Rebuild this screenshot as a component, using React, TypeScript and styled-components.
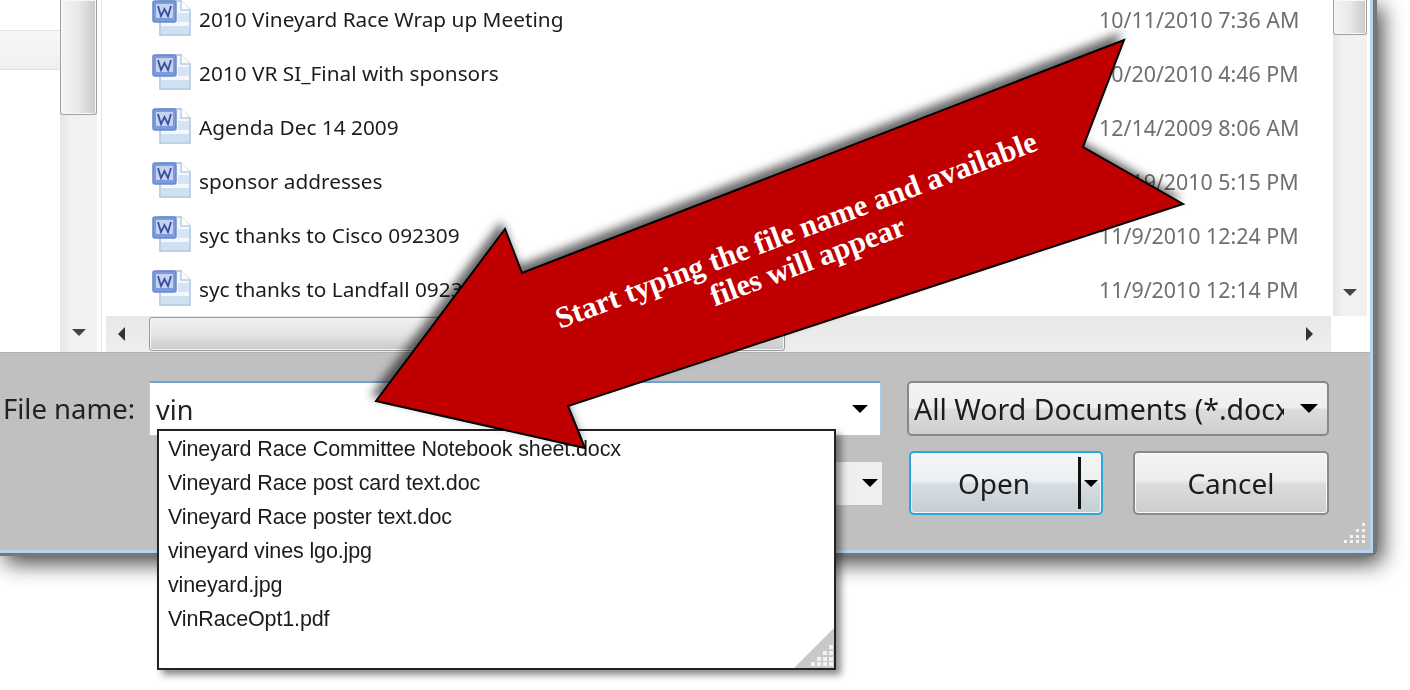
import styled, { createGlobalStyle } from "styled-components";

const GlobalStyle = createGlobalStyle`
  html, body {
    margin: 0;
    padding: 0;
    background: #fff;
  }
`;

const Page = styled.div`
  position: relative;
  width: 1410px;
  height: 690px;
  overflow: hidden;
  background: #fff;
  font-family: "Noto Sans", "Open Sans", sans-serif;
`;

const Window = styled.div`
  box-sizing: border-box;
  width: 1377px;
  height: 556px;
  border-right: 4px solid #777;
  border-bottom: 3px solid #777;
  border-bottom-right-radius: 5px;
  box-shadow: 5px 7px 22px rgba(0, 0, 0, 0.75);
`;

const WindowInner = styled.div`
  display: flex;
  flex-direction: column;
  box-sizing: border-box;
  height: 100%;
  border-right: 3px solid #b5d3ee;
  border-bottom: 3px solid #b5d3ee;
  background: #c0c0c0;
`;

const Browser = styled.div`
  display: grid;
  grid-template-columns: 60px 37px 1fr;
  height: 353px;
  background: #fff;
  border-bottom: 1px solid #b0b0b0;
  box-sizing: border-box;
`;

const NavPane = styled.div`
  padding-top: 30px;
`;

const NavRow = styled.div`
  height: 40px;
  box-sizing: border-box;
  border-top: 1px solid #e4e4e4;
  border-bottom: 1px solid #e4e4e4;
  background: linear-gradient(#f8f8f8, #efefef);
`;

const VScroll = styled.div<{ $width: number }>`
  display: flex;
  flex-direction: column;
  align-items: center;
  width: ${(p) => p.$width}px;
  flex: none;
  background: linear-gradient(90deg, #e6e6e6, #f1f1f1 30%, #f1f1f1);
`;

const VThumb = styled.div<{ $height: number }>`
  box-sizing: border-box;
  width: 100%;
  height: ${(p) => p.$height}px;
  border: 1px solid #a0a0a0;
  border-top: none;
  border-radius: 0 0 3px 3px;
  background: linear-gradient(90deg, #f4f4f4, #e8e8e8 50%, #c9cacc);
  box-shadow: inset 0 0 0 1px #f8f8f8;
`;

const Caret = styled.span<{ $dir?: "down" | "left" | "right"; $size: number; $color?: string }>`
  display: block;
  flex: none;
  width: 0;
  height: 0;
  border-style: solid;
  border-color: transparent;
  ${(p) =>
    p.$dir === "left"
      ? `border-width:${p.$size}px ${p.$size}px ${p.$size}px 0;border-right-color:${p.$color ?? "#333"};`
      : p.$dir === "right"
        ? `border-width:${p.$size}px 0 ${p.$size}px ${p.$size}px;border-left-color:${p.$color ?? "#333"};`
        : `border-width:${p.$size}px ${p.$size}px 0 ${p.$size}px;border-top-color:${p.$color ?? "#000"};`}
`;

const VArrowSlot = styled.div<{ $top: number }>`
  margin-top: ${(p) => p.$top}px;
`;

const FilesColumn = styled.div`
  display: flex;
  flex-direction: column;
  min-width: 0;
  padding-left: 4px;
  border-left: 1px solid #d8e8f6;
  margin-left: 4px;
`;

const FilesArea = styled.div`
  display: flex;
  height: 316px;
  padding-right: 3px;
`;

const FileList = styled.div`
  flex: 1;
  min-width: 0;
  height: 316px;
  overflow: hidden;
  padding-left: 46px;
`;

const FileRows = styled.div`
  margin-top: -8px;
`;

const FileRow = styled.div`
  display: flex;
  align-items: center;
  height: 54px;
`;

const FileIcon = styled.svg`
  flex: none;
  width: 40px;
  height: 40px;
  filter: blur(0.6px);
`;

const FileName = styled.span`
  width: 900px;
  margin-left: 7px;
  font-size: 20.8px;
  color: #1c1c1c;
  white-space: nowrap;
  filter: blur(0.5px);
`;

const FileDate = styled.span`
  font-size: 21.4px;
  color: #6f6f6f;
  white-space: nowrap;
  filter: blur(0.5px);
`;

const HScroll = styled.div`
  display: flex;
  align-items: center;
  height: 36px;
  width: 1225px;
  background: linear-gradient(#e8e8e8, #eeeeee);
`;

const HArrowLeft = styled.div`
  width: 43px;
  padding-left: 12px;
  box-sizing: border-box;
`;

const HThumb = styled.div`
  box-sizing: border-box;
  width: 636px;
  height: 34px;
  border: 1px solid #9a9a9a;
  border-radius: 3px;
  background: linear-gradient(#f2f2f2, #e4e4e4 50%, #c8c9cb);
  box-shadow: inset 0 0 0 1px #f6f6f6;
`;

const HArrowRight = styled.div`
  margin-left: auto;
  padding-right: 18px;
`;

const ControlPanel = styled.div`
  position: relative;
  flex: 1;
  display: grid;
  grid-template-columns: 146px 758px 422px;
  grid-template-rows: 55px 64px;
  row-gap: 15px;
  padding: 28px 0 0 3px;
`;

const NameLabel = styled.label`
  align-self: center;
  font-size: 27.5px;
  color: #222;
  filter: blur(0.5px);
`;

const NameCombo = styled.div`
  display: flex;
  align-items: center;
  justify-content: space-between;
  box-sizing: border-box;
  width: 732px;
  padding: 0 12px 0 6px;
  border: 1px solid #a6cdec;
  border-top: 2px solid #6ea3d0;
  border-radius: 2px;
  background: #fff;
`;

const NameValue = styled.span`
  font-size: 27px;
  color: #222;
  filter: blur(0.5px);
`;

const TypeSelect = styled.div`
  display: flex;
  align-items: center;
  box-sizing: border-box;
  padding: 0 9px 0 5px;
  border: 2px solid #888;
  border-radius: 5px;
  background: linear-gradient(#f3f3f3, #eeeeee 48%, #dcdcdc 52%, #cfcfcf);
`;

const TypeValue = styled.span`
  flex: 1;
  min-width: 0;
  margin-right: 16px;
  overflow: hidden;
  white-space: nowrap;
  font-size: 28.5px;
  color: #1c1c1c;
  filter: blur(0.5px);
`;

const SecondComboCell = styled.div`
  display: flex;
  justify-content: flex-end;
  align-items: center;
  padding-right: 25px;
`;

const SecondCombo = styled.div`
  display: flex;
  align-items: center;
  justify-content: flex-end;
  box-sizing: border-box;
  width: 60px;
  height: 43px;
  padding-right: 4px;
  background: #efefef;
`;

const Actions = styled.div`
  display: flex;
  justify-content: space-between;
  padding-left: 2px;
`;

const PushButton = styled.button<{ $primary?: boolean }>`
  position: relative;
  box-sizing: border-box;
  width: ${(p) => (p.$primary ? 194 : 196)}px;
  height: 64px;
  padding: 0;
  border: 2px solid ${(p) => (p.$primary ? "#2ba6dc" : "#8a8a8a")};
  border-radius: 5px;
  font: inherit;
  font-size: 28px;
  color: #1c1c1c;
  text-align: center;
  background: ${(p) =>
    p.$primary
      ? "linear-gradient(#f3f5f6, #edf0f2 46%, #d6dee3 52%, #c5ced3)"
      : "linear-gradient(#f4f4f4, #ececec 46%, #dcdcdc 52%, #cdcdcd)"};
  box-shadow: inset 0 0 0 1px #f8f8f8;
`;

const ButtonLabel = styled.span<{ $primary?: boolean }>`
  display: block;
  padding-right: ${(p) => (p.$primary ? 24 : 0)}px;
  filter: blur(0.5px);
`;

const SplitDivider = styled.span`
  position: absolute;
  top: 4px;
  bottom: 4px;
  right: 20px;
  width: 3px;
  background: #111;
`;

const SplitCaret = styled.span`
  position: absolute;
  top: 27px;
  right: 3px;
`;

const WindowGrip = styled.svg`
  position: absolute;
  right: 4px;
  bottom: 7px;
  width: 24px;
  height: 24px;
`;

const Suggestions = styled.div`
  position: absolute;
  left: 157px;
  top: 429px;
  box-sizing: border-box;
  width: 679px;
  height: 241px;
  border: 2px solid #222;
  background: #fff;
  padding: 2px 0 0 9px;
  box-shadow: 5px 5px 7px rgba(0, 0, 0, 0.45);
  font-family: "Liberation Sans", Arial, sans-serif;
`;

const Suggestion = styled.div`
  height: 34px;
  line-height: 32px;
  font-size: 21.5px;
  letter-spacing: -0.13px;
  color: #1c1c1c;
  white-space: nowrap;
  filter: blur(0.5px);
`;

const SuggestionGrip = styled.svg`
  position: absolute;
  right: 0;
  bottom: 0;
  width: 40px;
  height: 40px;
`;

const Callout = styled.svg`
  position: absolute;
  left: 0;
  top: 0;
  width: 1410px;
  height: 690px;
  filter: drop-shadow(-4px -6px 5px rgba(0, 0, 0, 0.6));
`;

const CalloutText = styled.div`
  position: absolute;
  left: 302px;
  top: 213px;
  width: 1000px;
  text-align: center;
  font-family: "Liberation Serif", "Times New Roman", serif;
  font-weight: bold;
  font-size: 30.4px;
  line-height: 33px;
  color: #fff;
  transform: rotate(-20.5deg);
`;

const files = [
  { name: "2010 Vineyard Race Wrap up Meeting", date: "10/11/2010 7:36 AM" },
  { name: "2010 VR SI_Final with sponsors", date: "10/20/2010 4:46 PM" },
  { name: "Agenda Dec 14 2009", date: "12/14/2009 8:06 AM" },
  { name: "sponsor addresses", date: "10/19/2010 5:15 PM" },
  { name: "syc thanks to Cisco 092309", date: "11/9/2010 12:24 PM" },
  { name: "syc thanks to Landfall 092309", date: "11/9/2010 12:14 PM" },
];

const suggestions = [
  "Vineyard Race Committee Notebook sheet.docx",
  "Vineyard Race post card text.doc",
  "Vineyard Race poster text.doc",
  "vineyard vines lgo.jpg",
  "vineyard.jpg",
  "VinRaceOpt1.pdf",
];

const WordIcon = () => (
  <FileIcon viewBox="0 0 40 40">
    <path d="M8 2h21l9 9v25H8z" fill="#f4f8fc" stroke="#a9c3dd" strokeWidth="1.5" />
    <path d="M29 1v10h9" fill="#fff" stroke="#b8cde2" strokeWidth="1.5" />
    <path d="M9 27h28v8H9z" fill="#cfe0f1" />
    <path d="M26 14h11v9H26z" fill="#d7e5f3" />
    <rect x="1" y="2" width="23" height="21" rx="2" fill="#7b9bdc" stroke="#6a88cc" strokeWidth="1.5" />
    <rect x="4" y="5" width="17" height="14" fill="#c5d3ef" />
    <path d="M6 7l3 10 3.500-7 3.500 7 3-10" fill="none" stroke="#3a4f9f" strokeWidth="1.800" />
  </FileIcon>
);

const gripDots = [
  [20, 4],
  [14, 10],
  [20, 10],
  [8, 16],
  [14, 16],
  [20, 16],
  [2, 21],
  [8, 21],
  [14, 21],
  [20, 21],
];

export default function App() {
  return (
    <Page>
      <GlobalStyle />
      <Window>
        <WindowInner>
          <Browser>
            <NavPane>
              <NavRow />
            </NavPane>
            <VScroll $width={37}>
              <VThumb $height={115} />
              <VArrowSlot $top={214}>
                <Caret $size={7} $color="#444" />
              </VArrowSlot>
            </VScroll>
            <FilesColumn>
              <FilesArea>
                <FileList>
                  <FileRows>
                    {files.map((f) => (
                      <FileRow key={f.name}>
                        <WordIcon />
                        <FileName>{f.name}</FileName>
                        <FileDate>{f.date}</FileDate>
                      </FileRow>
                    ))}
                  </FileRows>
                </FileList>
                <VScroll $width={34}>
                  <VThumb $height={35} />
                  <VArrowSlot $top={254}>
                    <Caret $size={7} $color="#444" />
                  </VArrowSlot>
                </VScroll>
              </FilesArea>
              <HScroll>
                <HArrowLeft>
                  <Caret $dir="left" $size={7} />
                </HArrowLeft>
                <HThumb />
                <HArrowRight>
                  <Caret $dir="right" $size={7} />
                </HArrowRight>
              </HScroll>
            </FilesColumn>
          </Browser>
          <ControlPanel>
            <NameLabel>File name:</NameLabel>
            <NameCombo>
              <NameValue>vin</NameValue>
              <Caret $size={8} />
            </NameCombo>
            <TypeSelect>
              <TypeValue>All Word Documents (*.docx)</TypeValue>
              <Caret $size={9} />
            </TypeSelect>
            <span />
            <SecondComboCell>
              <SecondCombo>
                <Caret $size={8} />
              </SecondCombo>
            </SecondComboCell>
            <Actions>
              <PushButton $primary>
                <ButtonLabel $primary>Open</ButtonLabel>
                <SplitDivider />
                <SplitCaret>
                  <Caret $size={7} />
                </SplitCaret>
              </PushButton>
              <PushButton>
                <ButtonLabel>Cancel</ButtonLabel>
              </PushButton>
            </Actions>
            <WindowGrip viewBox="0 0 24 24">
              {gripDots.map(([x, y]) => (
                <rect key={`${x}-${y}`} x={x} y={y} width="3" height="3" fill="#f4f4f4" />
              ))}
            </WindowGrip>
          </ControlPanel>
        </WindowInner>
      </Window>
      <Suggestions>
        {suggestions.map((s) => (
          <Suggestion key={s}>{s}</Suggestion>
        ))}
        <SuggestionGrip viewBox="0 0 40 40">
          <path d="M0 40L40 0v40z" fill="#c9c9c9" />
          {gripDots.map(([x, y]) => (
            <rect key={`${x}-${y}`} x={x + 15} y={y + 13} width="4" height="4" fill="#f2f2f2" />
          ))}
        </SuggestionGrip>
      </Suggestions>
      <Callout viewBox="0 0 1410 690">
        <path
          d="M376 401L505 229L522 273L1124 40L1083 147L1183 204L568 406L585 448Z"
          fill="#c00000"
          stroke="#000"
          strokeWidth="2"
          strokeLinejoin="miter"
        />
      </Callout>
      <CalloutText>
        Start typing the file name and available
        <br />
        files will appear
      </CalloutText>
    </Page>
  );
}
